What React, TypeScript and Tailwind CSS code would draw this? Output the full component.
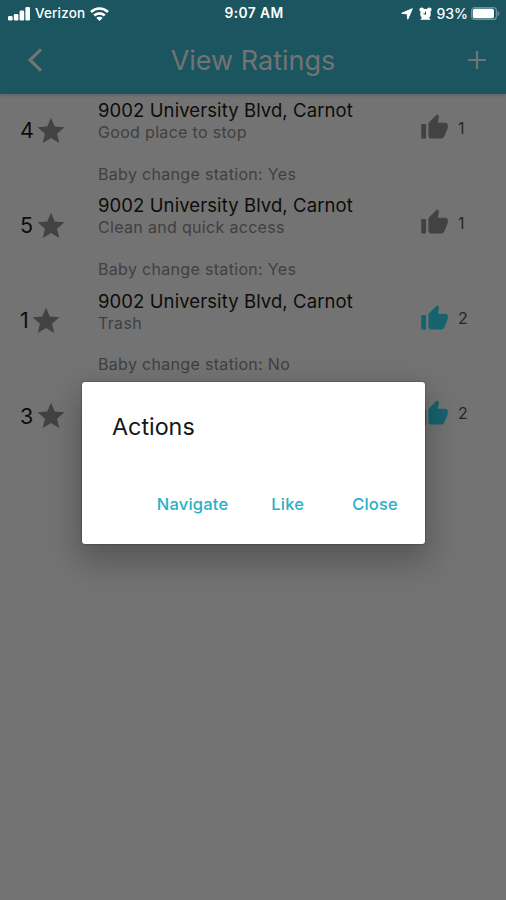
import { MdStar, MdThumbUp } from 'react-icons/md';

type Rating = {
  stars: number;
  address: string;
  comment?: string;
  station?: string;
  likes: number;
  liked: boolean;
};

const ratings: Rating[] = [
  { stars: 4, address: '9002 University Blvd, Carnot', comment: 'Good place to stop', station: 'Yes', likes: 1, liked: false },
  { stars: 5, address: '9002 University Blvd, Carnot', comment: 'Clean and quick access', station: 'Yes', likes: 1, liked: false },
  { stars: 1, address: '9002 University Blvd, Carnot', comment: 'Trash', station: 'No', likes: 2, liked: true },
  { stars: 3, address: '', likes: 2, liked: true },
];

const StatusBar = () => (
  <div className="grid h-[27px] grid-cols-[1fr_auto_1fr] items-center pl-2 pr-[6px] text-[13.5px] font-medium leading-none text-white">
    <div className="flex items-center">
      <svg className="h-[14px] w-[22px]" viewBox="0 0 22 14" fill="currentColor">
        <rect x="0" y="9" width="4.600" height="4.500" rx="1.200" />
        <rect x="5.800" y="7" width="4.600" height="6.500" rx="1.200" />
        <rect x="11.600" y="3.500" width="4.600" height="10" rx="1.200" />
        <rect x="17.400" y="0" width="4.600" height="13.500" rx="1.200" />
      </svg>
      <span className="ml-[5px] tracking-[0.150px]">Verizon</span>
      <svg className="ml-[5px] h-[14px] w-[19px]" viewBox="0 0 19 14" fill="none" stroke="currentColor" strokeWidth="2.700">
        <path d="M1 5C5.800.3 13.200.3 18 5" />
        <path d="M4.200 8.500c3-2.900 7.600-2.900 10.600 0" />
        <path d="M9.500 14 6.300 11c1.700-1.700 4.700-1.700 6.400 0z" fill="currentColor" stroke="none" />
      </svg>
    </div>
    <span className="text-[13.800px] font-semibold tracking-[0.400px]">9:07 AM</span>
    <div className="flex items-center justify-end">
      <svg className="h-[12px] w-[12px]" viewBox="0 0 12 12" fill="currentColor" stroke="currentColor" strokeLinejoin="round">
        <path d="M11.300.7 6.800 11.200 6.200 5.900.7 5.300z" />
      </svg>
      <svg className="ml-[6px] h-[13px] w-[13px]" viewBox="0 0 13 13" fill="currentColor">
        <circle cx="2.700" cy="2.700" r="2.300" />
        <circle cx="10.300" cy="2.700" r="2.300" />
        <path d="m1.300 12.800 2-2.500h6.400l2 2.500z" />
        <circle cx="6.500" cy="7" r="5.300" />
        <path d="M6.500 4.500V7.400l-2-.8" fill="none" stroke="#1b5660" strokeWidth="1" />
      </svg>
      <span className="ml-[5px] text-[14px]">93%</span>
      <svg className="ml-[3px] h-[13px] w-[29px]" viewBox="0 0 29 13">
        <rect x=".6" y=".6" width="24.800" height="11.800" rx="3" fill="none" stroke="#6d9299" strokeWidth="1.200" />
        <rect x="1.800" y="1.800" width="21.200" height="9.400" rx="1.800" fill="#fff" />
        <path d="M26.600 4v5c2.200-.9 2.200-4.100 0-5z" fill="#6d9299" />
      </svg>
    </div>
  </div>
);

const Header = () => (
  <header className="relative h-[94px] shrink-0 bg-[#1b5660] shadow-[0_1px_3px_rgba(0,0,0,0.2)]">
    <StatusBar />
    <div className="grid h-[65px] grid-cols-[1fr_auto_1fr] items-center pl-[27px] pr-[20px] text-[#737373]">
      <svg className="h-[24px] w-[16px]" viewBox="0 0 16 24" fill="none" stroke="currentColor" strokeWidth="3.200">
        <path d="M14 1.300 3 12l11 10.700" />
      </svg>
      <h1 className="mr-[7px] pt-px text-[27px] leading-none">View Ratings</h1>
      <svg className="h-[18px] w-[18px] justify-self-end" viewBox="0 0 18 18" stroke="currentColor" strokeWidth="2.200">
        <path d="M9 0v18M0 9h18" />
      </svg>
    </div>
  </header>
);

const RatingRow = ({ rating }: { rating: Rating }) => (
  <li className="flex h-[95.300px]">
    <div className="flex h-[73px] w-[98px] items-center pl-5">
      <span className="text-[21.500px] leading-none text-[#0c0c0c]">{rating.stars}</span>
      <MdStar className="ml-[1.500px] size-8 text-[#424242]" />
    </div>
    <div className="flex-1 whitespace-nowrap pt-[5px]">
      <p className="text-[18.500px] leading-[23px] tracking-[0.090px] text-[#0c0c0c]">{rating.address}</p>
      <div className="text-[16px] leading-[21px] tracking-[0.320px] text-[#404040]">
        <p>{rating.comment}</p>
        {rating.station && <p className="mt-[20.500px]">Baby change station: {rating.station}</p>}
      </div>
    </div>
    <div className="flex h-[67px] w-[86px] items-center gap-[9px]">
      <MdThumbUp className={rating.liked ? 'size-[29px] text-[#15636f]' : 'size-[29px] text-[#424242]'} />
      <span className="text-[16px] leading-none text-[#262626]">{rating.likes}</span>
    </div>
  </li>
);

const ActionsDialog = () => (
  <div className="absolute inset-0 flex items-start justify-center pt-[382px]">
    <div
      role="dialog"
      className="ml-px flex h-[162px] w-[343px] flex-col justify-between rounded-[3px] bg-white pb-[29px] pl-[30px] pr-[27px] pt-[31px] shadow-[0_14px_32px_4px_rgba(0,0,0,0.25),0_0_2px_rgba(0,0,0,0.5)]"
    >
      <h2 className="text-[23.300px] leading-[28px] text-[#161616]">Actions</h2>
      <div className="flex justify-end text-[16.500px] font-medium leading-[22px] tracking-[0.200px] text-[#29b0c7]">
        <button>Navigate</button>
        <button className="ml-[43px]">Like</button>
        <button className="ml-[48px]">Close</button>
      </div>
    </div>
  </div>
);

export default function App() {
  return (
    <div className="relative flex h-[900px] w-[506px] flex-col overflow-hidden bg-[#737373] font-['Inter',sans-serif]">
      <Header />
      <ul>
        {ratings.map((rating, i) => (
          <RatingRow key={i} rating={rating} />
        ))}
      </ul>
      <ActionsDialog />
    </div>
  );
}
